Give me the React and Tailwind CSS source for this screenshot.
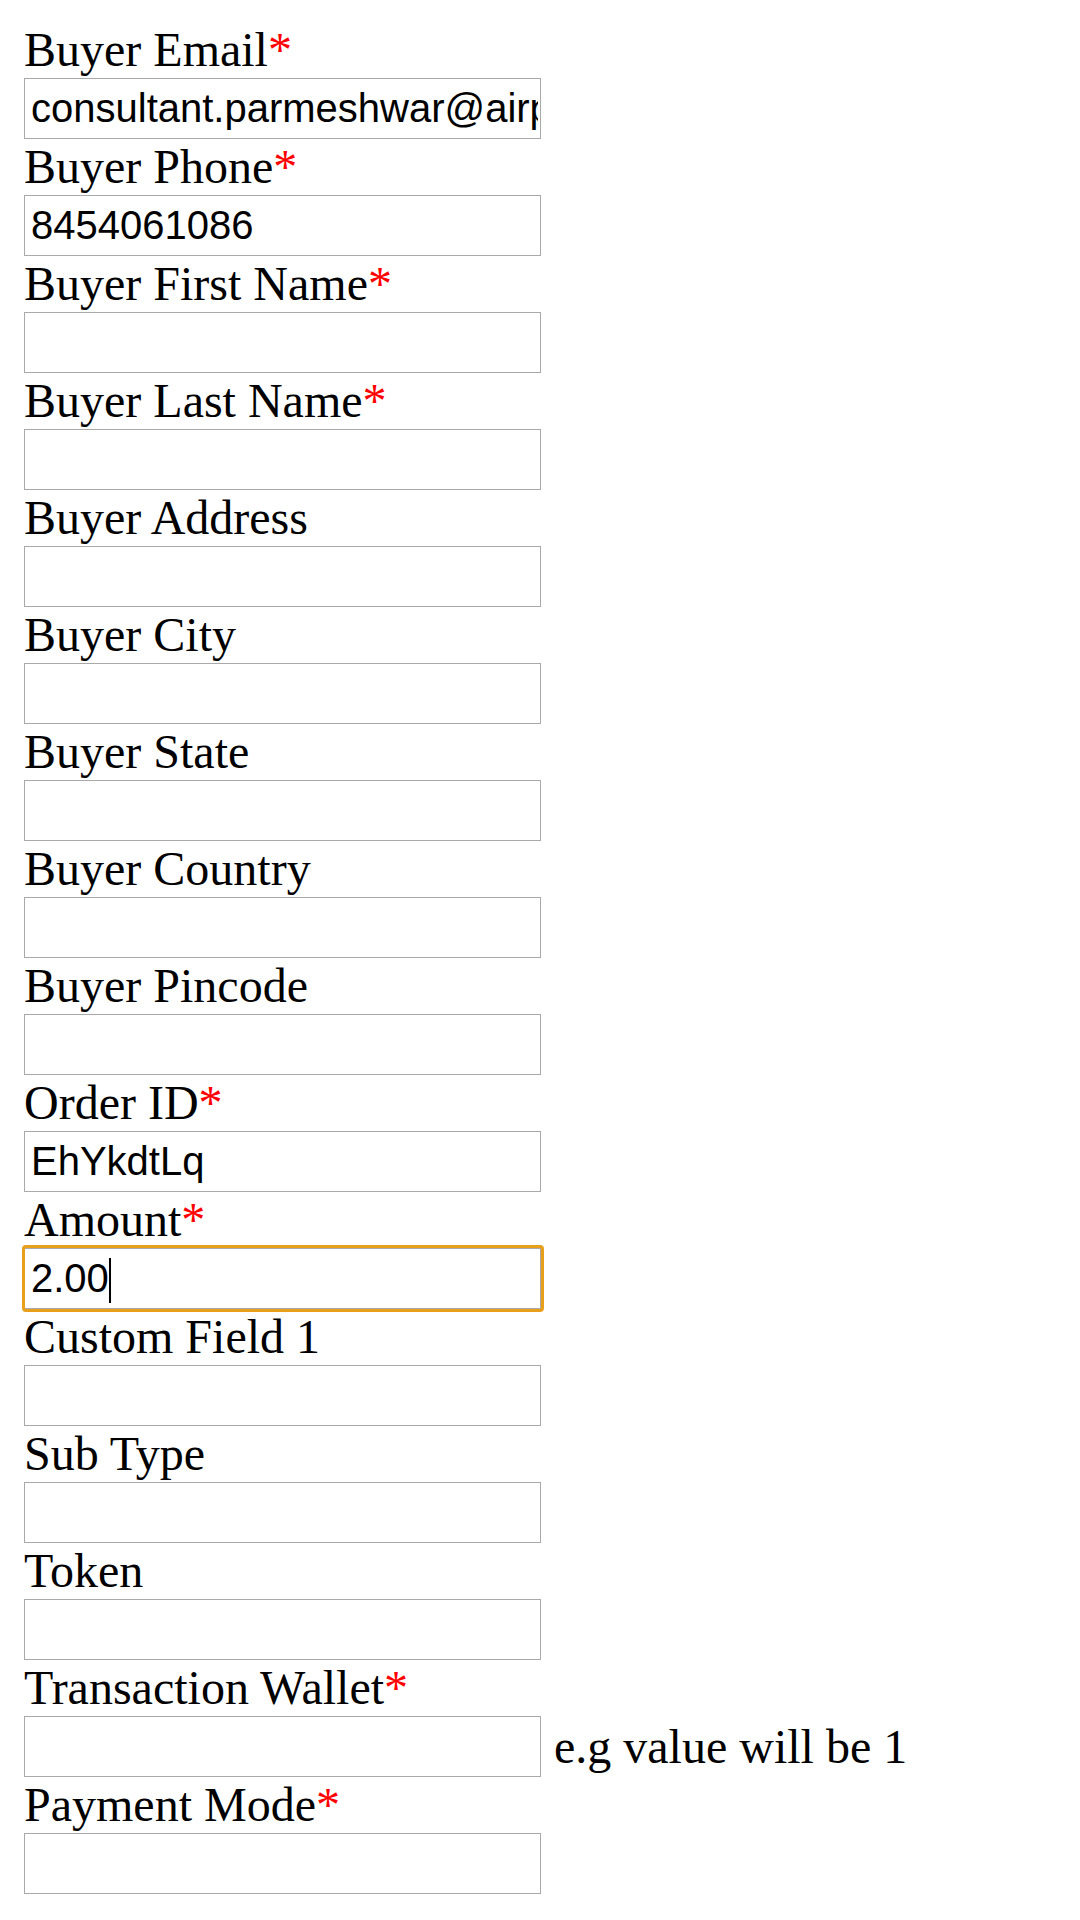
import React from "react";

const fields = [
  { label: "Buyer Email", req: true, value: "consultant.parmeshwar@airpay.co.in" },
  { label: "Buyer Phone", req: true, value: "8454061086" },
  { label: "Buyer First Name", req: true, value: "" },
  { label: "Buyer Last Name", req: true, value: "" },
  { label: "Buyer Address", req: false, value: "" },
  { label: "Buyer City", req: false, value: "" },
  { label: "Buyer State", req: false, value: "" },
  { label: "Buyer Country", req: false, value: "" },
  { label: "Buyer Pincode", req: false, value: "" },
  { label: "Order ID", req: true, value: "EhYkdtLq" },
  { label: "Amount", req: true, value: "2.00", focus: true },
  { label: "Custom Field 1", req: false, value: "" },
  { label: "Sub Type", req: false, value: "" },
  { label: "Token", req: false, value: "" },
  { label: "Transaction Wallet", req: true, value: "", hint: "e.g value will be 1" },
  { label: "Payment Mode", req: true, value: "" },
];

export default function App() {
  return (
    <div
      className="min-h-[1920px] w-[1080px] bg-white pt-[22px] pl-[24px] text-black"
      style={{ fontFamily: '"Liberation Serif", "Times New Roman", serif' }}
    >
      {fields.map((f) => (
        <div key={f.label}>
          <div className="h-[56px] text-[48px] leading-[56px] whitespace-nowrap">
            {f.label}
            {f.req && <span className="text-[#ff0000]">*</span>}
          </div>
          <div className="flex items-center">
            <div className="relative h-[61px] w-[517px]">
              <input
                readOnly
                defaultValue={f.value}
                className="box-border h-[61px] w-[517px] border border-[#a9a9a9] bg-white pl-[6px] pr-[2px] text-[40px] text-black outline-none"
                style={{ fontFamily: '"Liberation Sans", Arial, sans-serif' }}
              />
              {f.focus && (
                <>
                  <div className="pointer-events-none absolute -left-[2px] -top-[3px] h-[67px] w-[522px] rounded-[4px] border-[3px] border-[#e8a01c]" />
                  <div className="pointer-events-none absolute left-[85px] top-[10px] h-[45px] w-[2px] bg-black" />
                </>
              )}
            </div>
            {f.hint && (
              <span className="ml-[13px] text-[48px] leading-[56px] whitespace-nowrap">
                {f.hint}
              </span>
            )}
          </div>
        </div>
      ))}
    </div>
  );
}
